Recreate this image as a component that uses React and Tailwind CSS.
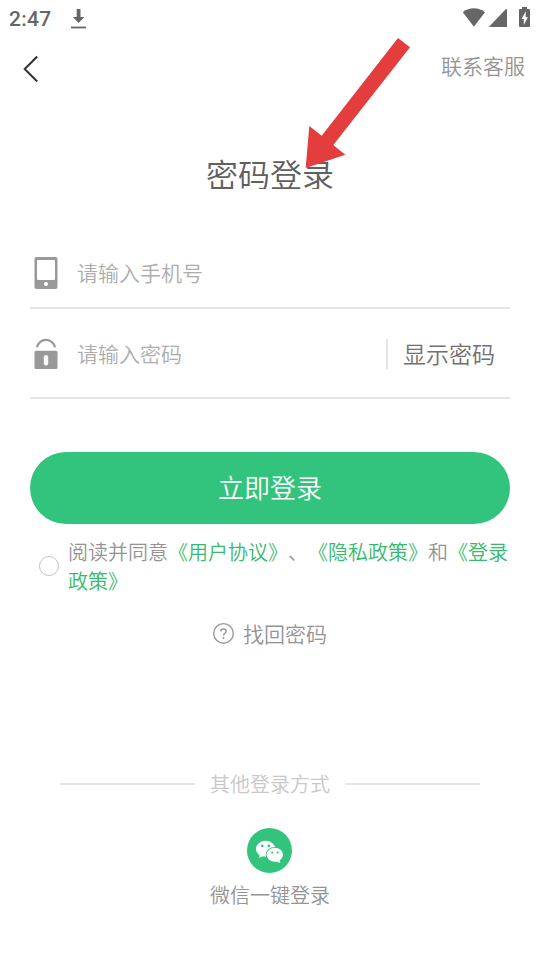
import React from 'react';

const DownloadIcon = () => (
  <svg className="w-4 h-5" viewBox="0 0 16 20" fill="#666666">
    <path d="M5.7 -0.2h3.8v8.3h3.9L7.6 14 1.8 8.1h3.9z" />
    <rect x="0" y="17.6" width="15" height="1.8" />
  </svg>
);

const StatusIcons = () => (
  <svg className="w-[68px] h-5" viewBox="0 0 68 20" fill="#666666">
    {/* wifi, signal, battery */}
    <path d="M0.8 5.2C4.3 2.2 8.3 1.2 11.9 1.2S19.5 2.2 23 5.2L11.9 19.8z" />
    <path d="M26.8 20 43.7 2.2c.6-.5 1.3-.2 1.3.6V20z" />
    <path
      fillRule="evenodd"
      d="M60 0h5v2h1.8c.8 0 1.2.5 1.2 1.2v15.5c0 .8-.5 1.3-1.3 1.3h-8.4c-.8 0-1.3-.5-1.3-1.3V3.2c0-.7.4-1.2 1.2-1.2H60zM63.7 4.3 59.6 12h2.2v6l4.1-7.8h-2.2z"
    />
  </svg>
);

const BackIcon = () => (
  <svg className="w-4 h-7" viewBox="0 0 16 28" fill="none" stroke="#333333" strokeWidth="2">
    <path d="M14.2 1.5 1.7 14l12.5 12.5" />
  </svg>
);

const PhoneIcon = () => (
  <svg className="w-6 h-8" viewBox="0 0 24 32">
    <rect x="0.5" y="0" width="23" height="32" rx="2" fill="#999999" />
    <rect x="3" y="3" width="18" height="20" rx="1" fill="#fff" />
    <circle cx="12" cy="27" r="2" fill="#fff" />
  </svg>
);

const LockIcon = () => (
  <svg className="w-6 h-8" viewBox="0 0 24 32">
    <path d="M3 10.3a9.1 8.6 0 0 1 18 0" fill="none" stroke="#999999" strokeWidth="2.2" />
    <rect x="0.5" y="13.8" width="23" height="18.2" rx="1.5" fill="#999999" />
    <rect x="9.8" y="18" width="4.4" height="10.5" rx="2.2" fill="#fff" />
  </svg>
);

const HelpIcon = () => (
  <svg className="w-[22px] h-[22px]" viewBox="0 0 22 22" fill="none" stroke="#999999">
    <circle cx="11.5" cy="11.4" r="9.8" strokeWidth="1.4" />
    <path d="M8.8 9.5c0-1.6 1.1-2.6 2.7-2.6s2.7 1 2.7 2.4c0 2-2.7 2.2-2.7 4.2" strokeWidth="1.5" />
    <circle cx="11.5" cy="15.9" r="1" fill="#999999" stroke="none" />
  </svg>
);

const WechatIcon = () => (
  <svg className="w-[45px] h-[45px]" viewBox="0 0 45 45">
    <circle cx="22.5" cy="22.5" r="22.5" fill="#32c47c" />
    <path d="M12.8 25.5 12 30l4.8-2.6z" fill="#fff" />
    <ellipse cx="18.6" cy="20.8" rx="9.7" ry="8" fill="#fff" />
    <ellipse cx="27.8" cy="26.8" rx="9.1" ry="7.9" fill="#32c47c" />
    <ellipse cx="27.8" cy="26.8" rx="8.2" ry="7" fill="#fff" />
    <path d="M28.6 33.2 33.4 35 32.4 31z" fill="#fff" />
    <g fill="#32c47c">
      <circle cx="15.3" cy="17.9" r="1.3" />
      <circle cx="21.9" cy="17.9" r="1.3" />
      <circle cx="25.2" cy="24.5" r="1.1" />
      <circle cx="30.6" cy="24.5" r="1.1" />
    </g>
  </svg>
);

const Arrow = () => (
  <svg className="absolute left-[300px] top-[30px] w-[120px] h-[140px]" viewBox="300 30 120 140">
    <path d="M305.7 168 309.3 126 321.7 135.8 398 38 410 47.3 333.3 145 345.3 154.7z" fill="#e43d3d" />
  </svg>
);

export default function App() {
  return (
    <div className="relative flex flex-col w-[540px] h-[960px] overflow-hidden bg-white font-[350] text-[#949494] font-['Noto_Sans_CJK_SC_DemiLight','Noto_Sans_CJK_SC',sans-serif] [text-spacing-trim:space-all]">
      {/* Status bar */}
      <div className="flex h-9 items-start pl-[9px] pr-[10px] pt-[7px]">
        <span className="w-[62px] pt-px font-[Roboto,sans-serif] text-[21px] leading-[22px] font-medium tracking-[0.3px] text-[#666666]">2:47</span>
        <div className="pt-[2px]"><DownloadIcon /></div>
        <div className="ml-auto"><StatusIcons /></div>
      </div>

      {/* Header */}
      <header className="flex h-16 items-center justify-between pl-[23px] pr-[15px]">
        <button className="pt-[2px]"><BackIcon /></button>
        <button className="text-[21px] leading-[30px] mb-[7px]">联系客服</button>
      </header>

      <h1 className="mt-[57px] h-8 overflow-hidden text-center text-[32px] font-[350] leading-8 text-[#606060]">密码登录</h1>

      {/* Form */}
      <form className="mt-[50px] mx-[30px]">
        <div className="flex h-[70px] items-center border-b-2 border-[#e5e5e5] pl-1 pb-px">
          <PhoneIcon />
          <span className="ml-[19px] mb-[2px] text-[21px] leading-[30px] text-[#adadad]">请输入手机号</span>
        </div>
        <div className="flex h-[90px] items-center border-b-2 border-[#e5e5e5] pl-1">
          <LockIcon />
          <span className="ml-[19px] text-[21px] leading-[30px] text-[#adadad]">请输入密码</span>
          <span className="ml-auto mt-[2px] h-[30px] w-[124px] border-l-2 border-[#e5e5e5] pl-[15px] text-[23px] leading-[28px] text-[#707070]">显示密码</span>
        </div>
        <button type="button" className="mt-[53px] h-[72px] w-full rounded-full bg-[#32c47c] pb-[2px] text-[26px] leading-[70px] text-white">
          立即登录
        </button>
      </form>

      {/* Agreement */}
      <div className="mt-[13px] flex items-center pl-[39px]">
        <span className="h-5 w-5 rounded-full border-[1.5px] border-[#c4c4c4]" />
        <p className="ml-[9px] w-[442px] text-[20px] leading-[29px]">
          阅读并同意<span className="text-[#36ba6d]">《用户协议》</span>、<span className="text-[#36ba6d]">《隐私政策》</span>和<span className="text-[#36ba6d]">《登录政策》</span>
        </p>
      </div>

      <div className="mt-[23px] mr-px flex h-[30px] items-center justify-center gap-[9px]">
        <HelpIcon />
        <span className="text-[21px] leading-[30px]">找回密码</span>
      </div>

      {/* Other login methods */}
      <div className="mt-[121px] mx-[60px] flex h-[30px] items-center gap-[15px]">
        <span className="h-[2px] flex-1 bg-[#e5e5e5]" />
        <span className="text-[20px] leading-[30px] text-[#c8c8c8]">其他登录方式</span>
        <span className="h-[2px] flex-1 bg-[#e5e5e5]" />
      </div>
      <button className="mt-[29px] flex flex-col items-center">
        <span className="mr-px"><WechatIcon /></span>
        <span className="mt-[7px] text-[20px] leading-[30px]">微信一键登录</span>
      </button>

      <Arrow />
    </div>
  );
}
